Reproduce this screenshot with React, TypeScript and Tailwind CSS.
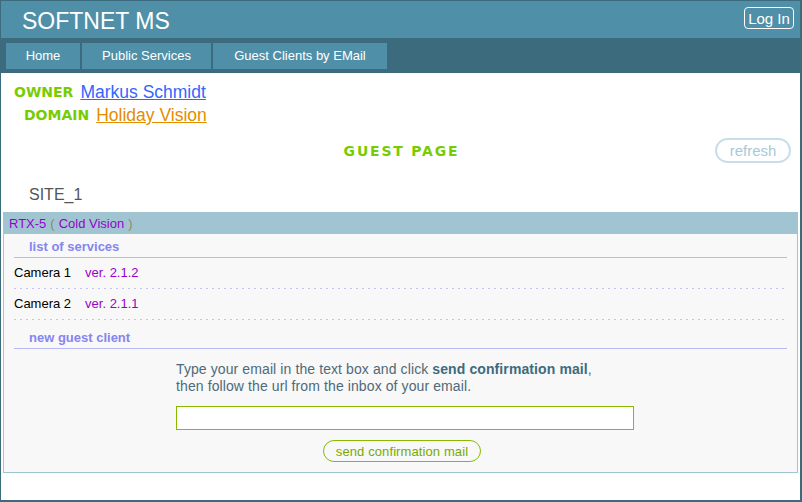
import React from 'react';

const NAV = ['Home', 'Public Services', 'Guest Clients by EMail'];
const NAV_W = ['w-[74px]', 'w-[129px]', 'w-[174px]'];

const SERVICES = [
  { name: 'Camera 1', ver: 'ver. 2.1.2' },
  { name: 'Camera 2', ver: 'ver. 2.1.1' },
];

const LABEL_FONT = { fontFamily: '"DejaVu Sans", Verdana, sans-serif' };

function SubTitle({ children, className = '' }: { children: React.ReactNode; className?: string }) {
  return (
    <div
      className={`mx-[10px] border-b border-[#b8b8f4] pl-[15px] h-[24px] flex items-end pb-[1px] text-[13px] font-bold text-[#8585f0] ${className}`}
    >
      {children}
    </div>
  );
}

export default function App() {
  return (
    <div
      className="w-[802px] h-[502px] overflow-hidden border-t border-l border-b-2 border-r-2 border-[#3d6b7e] bg-white flex flex-col"
      style={{ fontFamily: '"Liberation Sans", Arial, sans-serif' }}
    >
      <header className="h-[37px] bg-[#508fa8] flex items-start justify-between pl-[21px] pr-[6px] shrink-0">
        <span className="text-white text-[23px] leading-none pt-[9px]">SOFTNET MS</span>
        <button className="mt-[6px] h-[22px] w-[50px] border border-white rounded-[4px] text-white text-[15px] leading-none">
          Log In
        </button>
      </header>
      <nav className="h-[35px] bg-[#3d6b7e] flex items-start gap-[2px] pl-[5px] pt-[5px] shrink-0">
        {NAV.map((n, i) => (
          <div
            key={n}
            className={`${NAV_W[i]} h-[26px] bg-[#508fa8] text-white text-[13px] flex items-center justify-center`}
          >
            {n}
          </div>
        ))}
      </nav>

      <div className="flex-1 flex flex-col">
        <div className="pl-[13px] pt-[9px] h-[29px] flex items-center gap-[7px] leading-[20px]">
          <span className="text-[14px] font-bold text-[#77cc00]" style={LABEL_FONT}>
            OWNER
          </span>
          <a className="text-[17.5px] text-[#3366ff] underline">Markus Schmidt</a>
        </div>
        <div className="pl-[23px] mt-[3px] h-[20px] flex items-center gap-[7px] leading-[20px]">
          <span className="text-[14px] font-bold text-[#77cc00]" style={LABEL_FONT}>
            DOMAIN
          </span>
          <a className="text-[17.5px] text-[#e38d00] underline">Holiday Vision</a>
        </div>

        <div className="relative h-[40px] mt-[6px] flex items-center justify-center">
          <span className="text-[14px] font-bold text-[#77cc00] tracking-[1.8px] pl-[2px]" style={LABEL_FONT}>
            GUEST PAGE
          </span>
          <button className="absolute right-[9px] top-[7px] w-[76px] h-[25px] border-2 border-[#c6dfe9] rounded-full text-[15px] text-[#a9c9d9] leading-none">
            refresh
          </button>
        </div>

        <div className="pl-[28px] pt-[15px] h-[41px] text-[16px] leading-[18px] text-[#555]">SITE_1</div>

        <section className="mx-[2px] border border-[#a1c4d3] bg-[#f8f8f8] h-[261px]">
          <div className="h-[21px] bg-[#a1c4d3] flex items-center pl-[5px] text-[13px]">
            <span className="text-[#9900cc]">RTX-5</span>
            <span className="text-[#8c8c55] ml-[4px]">(</span>
            <span className="text-[#9900cc] ml-[4px]">Cold Vision</span>
            <span className="text-[#8c8c55] ml-[4px]">)</span>
          </div>
          <SubTitle>list of services</SubTitle>
          {SERVICES.map((s) => (
            <div key={s.name} className="mx-[10px] h-[31px] flex flex-col">
              <div className="flex-1 flex items-center text-[13px]">
                <span className="text-black">{s.name}</span>
                <span className="text-[#9900cc] ml-[14px]">{s.ver}</span>
              </div>
              <div className="h-[1px] bg-[repeating-linear-gradient(to_right,#c4c4f4_0_2px,transparent_2px_6px)]" />
            </div>
          ))}
          <SubTitle className="h-[29px]">new guest client</SubTitle>
          <div className="pl-[172px] pt-[12px] text-[14px] leading-[17px] text-[#4f6a78] tracking-[0.1px]">
            <p>
              Type your email in the text box and click{' '}
              <b className="text-[#3d6b7e]">send confirmation mail</b>,
            </p>
            <p>then follow the url from the inbox of your email.</p>
            <input className="mt-[11px] block w-[458px] h-[24px] border border-[#88bb00] bg-white outline-none" />
            <div className="w-[452px] flex justify-center mt-[10px]">
              <button className="h-[22px] px-[12px] border border-[#88bb00] rounded-full text-[13px] text-[#77aa00] leading-none">
                send confirmation mail
              </button>
            </div>
          </div>
        </section>
      </div>
    </div>
  );
}
